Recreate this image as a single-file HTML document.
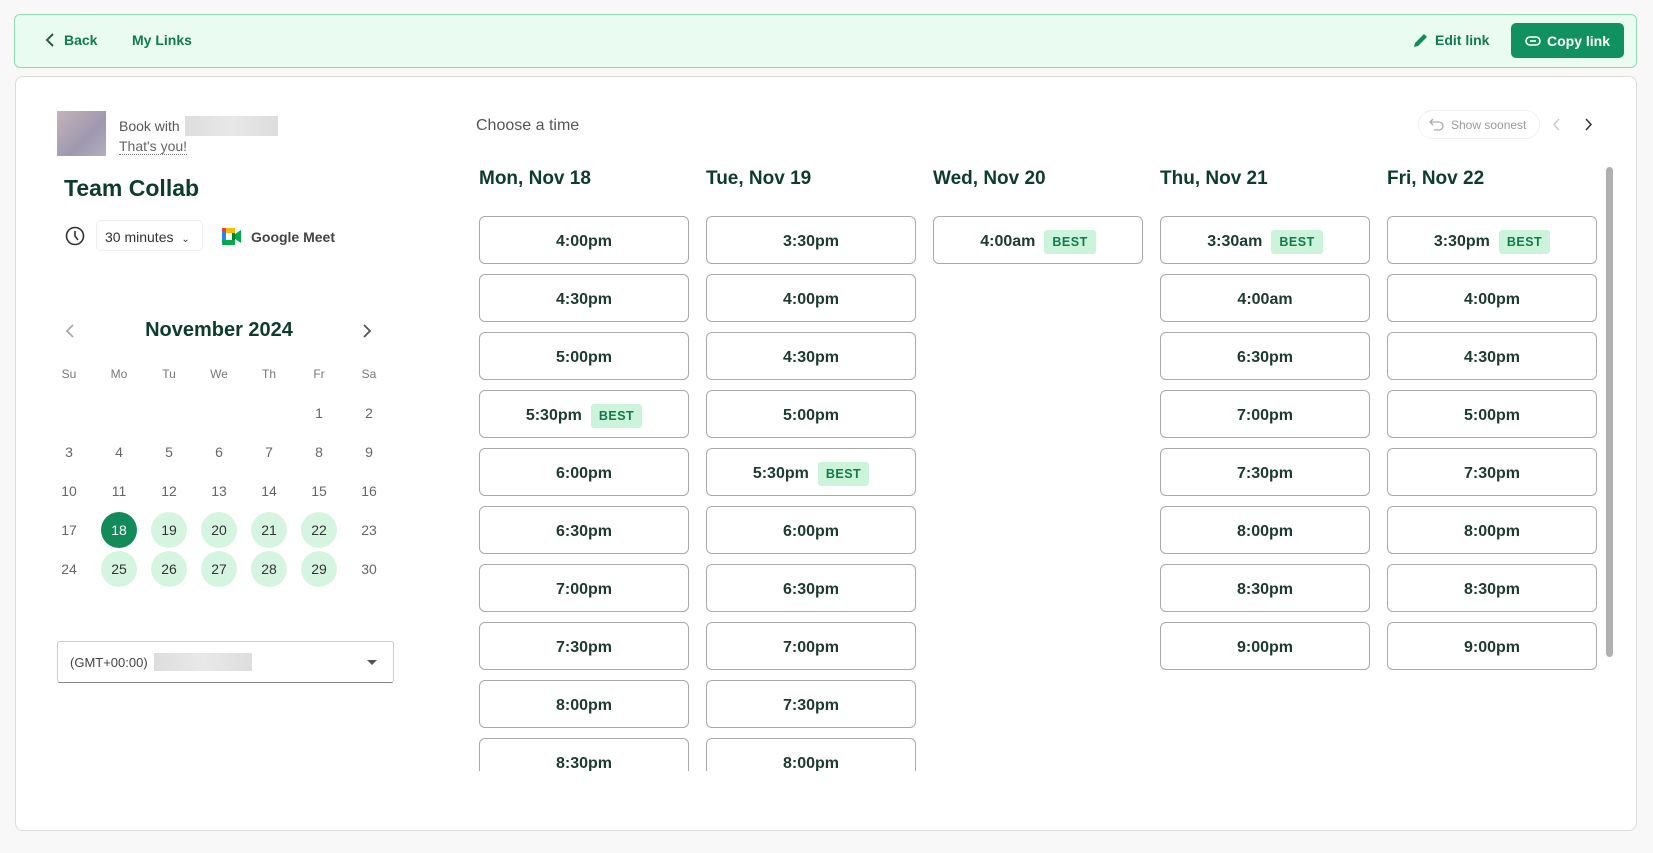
<!DOCTYPE html>
<html><head><meta charset="utf-8"><style>
*{box-sizing:border-box;margin:0;padding:0}
body{width:1653px;height:853px;background:#f8f8f8;font-family:"Liberation Sans",sans-serif;position:relative;overflow:hidden;color:#0d3b2c}
.abs{position:absolute}
.hdr{left:14px;top:14px;width:1623px;height:54px;background:#eafbf1;border:1px solid #8fdcb3;border-radius:6px}
.card{left:15px;top:76px;width:1622px;height:755px;background:#fff;border:1px solid #dcdcdc;border-radius:8px}
.nav{font-weight:bold;font-size:14px;color:#117a4f}
.btn{left:1511px;top:23px;width:113px;height:35px;background:#129160;border-radius:5px;color:#fff;font-weight:bold;font-size:14px;display:flex;align-items:center;justify-content:center;gap:6px}
.dh{font-size:19px;font-weight:bold;color:#0d3b2c;top:168px}
.slot{position:absolute;width:210px;height:48px;border:1px solid #a9a9a9;border-radius:6px;background:#fff;display:flex;align-items:center;justify-content:center;font-size:16px;font-weight:bold;color:#1c3a2e;gap:9px;padding-top:3px}
.best{background:#ccf4db;color:#127a4c;font-size:12.5px;padding:5px 8px;border-radius:3px;letter-spacing:.5px}
.cal{font-size:14px;color:#666;text-align:center;width:36px;height:36px;line-height:36px;border-radius:50%;margin-left:-18px;margin-top:-18px}
.av{background:#d6f5e0;color:#333}
.sel{background:#128a5a;color:#fff}
.wd{font-size:12px;color:#777;text-align:center;width:36px;margin-left:-18px;margin-top:-8px}
</style></head><body>
<div class="abs hdr"></div>
<svg class="abs" style="left:44px;top:32px" width="12" height="16" viewBox="0 0 12 16"><path d="M9 2 L3 8 L9 14" stroke="#2d5a46" stroke-width="2" fill="none"/></svg>
<div class="abs nav" style="left:64px;top:32px">Back</div>
<div class="abs nav" style="left:132px;top:32px">My Links</div>
<svg class="abs" style="left:1412px;top:31px" width="18" height="18" viewBox="0 0 18 18"><path d="M2 16 L3 12 L12 3 L15 6 L6 15 Z" fill="#128a5a"/></svg>
<div class="abs nav" style="left:1435px;top:32px;color:#117a4f">Edit link</div>
<div class="abs btn"><svg width="16" height="10" viewBox="0 0 16 10"><rect x="1" y="1" width="14" height="8" rx="4" stroke="#fff" stroke-width="1.6" fill="none"/><path d="M5 5 H11" stroke="#fff" stroke-width="1.6"/></svg>Copy link</div>
<div class="abs card"></div>
<div class="abs" style="left:57px;top:111px;width:49px;height:45px;background:linear-gradient(135deg,#c4b4b8,#9e98b0 60%,#b4aebc)"></div>
<div class="abs" style="left:119px;top:118px;font-size:14px;color:#555">Book with</div>
<div class="abs" style="left:185px;top:116px;width:93px;height:20px;background:linear-gradient(90deg,#ddd,#e8e8e8,#ddd)"></div>
<div class="abs" style="left:119px;top:139px;font-size:14px;color:#666;border-bottom:1px dotted #777;line-height:15px">That's you!</div>
<div class="abs" style="left:64px;top:175px;font-size:23px;font-weight:bold;color:#0d3b2c">Team Collab</div>
<svg class="abs" style="left:65px;top:226px" width="20" height="20" viewBox="0 0 20 20"><circle cx="10" cy="10" r="8.5" stroke="#333" stroke-width="1.6" fill="none"/><path d="M10 5 V10 L13 14" stroke="#333" stroke-width="1.6" fill="none"/></svg>
<div class="abs" style="left:96px;top:220px;width:107px;height:31px;border:1px solid #eee;border-radius:5px;font-size:14px;color:#333;padding:8px 0 0 8px">30 minutes <span style="font-size:10px;margin-left:4px">&#8964;</span></div>
<svg class="abs" style="left:222px;top:228px" width="20" height="17" viewBox="0 0 20 17"><path d="M4 0 H13 V5 H4 Z" fill="#f9bb05"/><path d="M0 4 L4 0 V12 H0 Z" fill="#2684fc"/><path d="M0 12 H13 V16 Q13 17 12 17 H1 Q0 17 0 16 Z" fill="#00ac47"/><path d="M13 5 V12 H10 V5 Z" fill="#00832d"/><path d="M13 6 L19 2 V15 L13 11 Z" fill="#00ac47"/><path d="M0 0 H4 V4 H0 Z" fill="#ea4335"/><rect x="4" y="5" width="6" height="7" fill="#fff"/></svg>
<div class="abs" style="left:251px;top:229px;font-size:14px;font-weight:bold;color:#444">Google Meet</div>
<svg class="abs" style="left:65px;top:323px" width="10" height="16" viewBox="0 0 10 16"><path d="M8 2 L2 8 L8 14" stroke="#aaa" stroke-width="1.8" fill="none"/></svg>
<div class="abs" style="left:119px;top:319px;width:200px;text-align:center;font-size:20px;font-weight:bold;color:#0d3b2c">November 2024</div>
<svg class="abs" style="left:362px;top:323px" width="10" height="16" viewBox="0 0 10 16"><path d="M2 2 L8 8 L2 14" stroke="#555" stroke-width="1.8" fill="none"/></svg>
<div class="abs wd" style="left:69px;top:375px">Su</div><div class="abs wd" style="left:119px;top:375px">Mo</div><div class="abs wd" style="left:169px;top:375px">Tu</div><div class="abs wd" style="left:219px;top:375px">We</div><div class="abs wd" style="left:269px;top:375px">Th</div><div class="abs wd" style="left:319px;top:375px">Fr</div><div class="abs wd" style="left:369px;top:375px">Sa</div>
<div class="abs cal" style="left:319px;top:413px">1</div><div class="abs cal" style="left:369px;top:413px">2</div>
<div class="abs cal" style="left:69px;top:452px">3</div><div class="abs cal" style="left:119px;top:452px">4</div><div class="abs cal" style="left:169px;top:452px">5</div><div class="abs cal" style="left:219px;top:452px">6</div><div class="abs cal" style="left:269px;top:452px">7</div><div class="abs cal" style="left:319px;top:452px">8</div><div class="abs cal" style="left:369px;top:452px">9</div>
<div class="abs cal" style="left:69px;top:491px">10</div><div class="abs cal" style="left:119px;top:491px">11</div><div class="abs cal" style="left:169px;top:491px">12</div><div class="abs cal" style="left:219px;top:491px">13</div><div class="abs cal" style="left:269px;top:491px">14</div><div class="abs cal" style="left:319px;top:491px">15</div><div class="abs cal" style="left:369px;top:491px">16</div>
<div class="abs cal" style="left:69px;top:530px">17</div><div class="abs cal sel" style="left:119px;top:530px">18</div><div class="abs cal av" style="left:169px;top:530px">19</div><div class="abs cal av" style="left:219px;top:530px">20</div><div class="abs cal av" style="left:269px;top:530px">21</div><div class="abs cal av" style="left:319px;top:530px">22</div><div class="abs cal" style="left:369px;top:530px">23</div>
<div class="abs cal" style="left:69px;top:569px">24</div><div class="abs cal av" style="left:119px;top:569px">25</div><div class="abs cal av" style="left:169px;top:569px">26</div><div class="abs cal av" style="left:219px;top:569px">27</div><div class="abs cal av" style="left:269px;top:569px">28</div><div class="abs cal av" style="left:319px;top:569px">29</div><div class="abs cal" style="left:369px;top:569px">30</div>
<div class="abs" style="left:57px;top:641px;width:337px;height:42px;border:1px solid #ccc;border-bottom:1.5px solid #888;border-radius:3px"></div>
<div class="abs" style="left:70px;top:655px;font-size:13px;color:#444">(GMT+00:00)</div>
<div class="abs" style="left:154px;top:653px;width:98px;height:18px;background:linear-gradient(90deg,#ddd,#e9e9e9,#ddd)"></div>
<svg class="abs" style="left:366px;top:659px" width="12" height="7" viewBox="0 0 12 7"><path d="M1 1 H11 L6 6 Z" fill="#555"/></svg>
<div class="abs" style="left:476px;top:117px;font-size:16px;color:#555">Choose a time</div>
<div class="abs" style="left:1418px;top:110px;width:122px;height:29px;border:1px solid #f0f0f0;border-radius:15px;font-size:12px;color:#999;padding:7px 0 0 32px">Show soonest</div>
<svg class="abs" style="left:1429px;top:117px" width="15" height="14" viewBox="0 0 15 14"><path d="M4 2 L1 5 L4 8 M1 5 H10 A4 4 0 0 1 10 13 H5" stroke="#aaa" stroke-width="1.3" fill="none"/></svg>
<svg class="abs" style="left:1553px;top:118px" width="8" height="13" viewBox="0 0 8 13"><path d="M6 1 L1 6.5 L6 12" stroke="#ccc" stroke-width="1.5" fill="none"/></svg>
<svg class="abs" style="left:1584px;top:118px" width="8" height="13" viewBox="0 0 8 13"><path d="M2 1 L7 6.5 L2 12" stroke="#333" stroke-width="1.5" fill="none"/></svg>
<div class="abs dh" style="left:479px">Mon, Nov 18</div>
<div class="abs dh" style="left:706px">Tue, Nov 19</div>
<div class="abs dh" style="left:933px">Wed, Nov 20</div>
<div class="abs dh" style="left:1160px">Thu, Nov 21</div>
<div class="abs dh" style="left:1387px">Fri, Nov 22</div>
<div class="abs" style="left:1606px;top:167px;width:7px;height:490px;background:#b0b0b0;border-radius:4px"></div>
<div class="abs" style="left:470px;top:200px;width:1130px;height:571px;overflow:hidden">
<div class="slot" style="left:9px;top:16px">4:00pm</div>
<div class="slot" style="left:9px;top:74px">4:30pm</div>
<div class="slot" style="left:9px;top:132px">5:00pm</div>
<div class="slot" style="left:9px;top:190px">5:30pm<span class="best">BEST</span></div>
<div class="slot" style="left:9px;top:248px">6:00pm</div>
<div class="slot" style="left:9px;top:306px">6:30pm</div>
<div class="slot" style="left:9px;top:364px">7:00pm</div>
<div class="slot" style="left:9px;top:422px">7:30pm</div>
<div class="slot" style="left:9px;top:480px">8:00pm</div>
<div class="slot" style="left:9px;top:538px">8:30pm</div>
<div class="slot" style="left:236px;top:16px">3:30pm</div>
<div class="slot" style="left:236px;top:74px">4:00pm</div>
<div class="slot" style="left:236px;top:132px">4:30pm</div>
<div class="slot" style="left:236px;top:190px">5:00pm</div>
<div class="slot" style="left:236px;top:248px">5:30pm<span class="best">BEST</span></div>
<div class="slot" style="left:236px;top:306px">6:00pm</div>
<div class="slot" style="left:236px;top:364px">6:30pm</div>
<div class="slot" style="left:236px;top:422px">7:00pm</div>
<div class="slot" style="left:236px;top:480px">7:30pm</div>
<div class="slot" style="left:236px;top:538px">8:00pm</div>
<div class="slot" style="left:463px;top:16px">4:00am<span class="best">BEST</span></div>
<div class="slot" style="left:690px;top:16px">3:30am<span class="best">BEST</span></div>
<div class="slot" style="left:690px;top:74px">4:00am</div>
<div class="slot" style="left:690px;top:132px">6:30pm</div>
<div class="slot" style="left:690px;top:190px">7:00pm</div>
<div class="slot" style="left:690px;top:248px">7:30pm</div>
<div class="slot" style="left:690px;top:306px">8:00pm</div>
<div class="slot" style="left:690px;top:364px">8:30pm</div>
<div class="slot" style="left:690px;top:422px">9:00pm</div>
<div class="slot" style="left:917px;top:16px">3:30pm<span class="best">BEST</span></div>
<div class="slot" style="left:917px;top:74px">4:00pm</div>
<div class="slot" style="left:917px;top:132px">4:30pm</div>
<div class="slot" style="left:917px;top:190px">5:00pm</div>
<div class="slot" style="left:917px;top:248px">7:30pm</div>
<div class="slot" style="left:917px;top:306px">8:00pm</div>
<div class="slot" style="left:917px;top:364px">8:30pm</div>
<div class="slot" style="left:917px;top:422px">9:00pm</div>
</div>
</body></html>
